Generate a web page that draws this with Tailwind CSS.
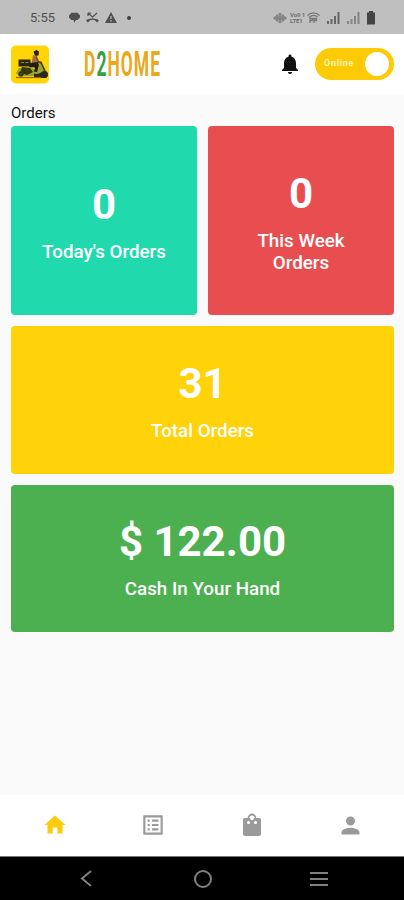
<!DOCTYPE html>
<html lang="en">
<head>
  <meta charset="UTF-8" />
  <meta name="viewport" content="width=device-width, initial-scale=1.0" />
  <title>D2HOME</title>
  <script src="https://cdn.jsdelivr.net/npm/@tailwindcss/browser@4"></script>
  <style>
    body { font-family: Roboto, sans-serif; }
  </style>
</head>
<body class="bg-[#fafafa] h-[900px] flex flex-col overflow-hidden">
  <!-- Status bar -->
  <div class="h-[34px] shrink-0 bg-[#bfbfbf] flex items-center justify-between pl-[30px] pr-[28px] pt-[1px] text-[#505050]">
    <div class="flex items-center">
      <span class="text-[13px] leading-none w-[39px]">5:55</span>
      <svg class="w-[11px] h-[11px]" viewBox="0 0 11 11" fill="currentColor">
        <path d="M2.5 0.7h6L11 3.5v2L8.5 8H7l-1.7 2.7L4.5 8H2.3L0 5.5v-2z" />
      </svg>
      <svg class="w-[13px] h-[11px] ml-[6px]" viewBox="0 0 13 11" fill="none" stroke="currentColor">
        <path d="M2 1l4.500 4L11 1M2 1v3M2 1h3" stroke-width="1.200" />
        <path d="M1.200 9.500C4 6 9 6 11.800 9.500" stroke-width="1.500" />
        <path d="M1 9.500l2-1.800M12 9.500l-2-1.800" stroke-width="2.600" />
      </svg>
      <svg class="w-[12px] h-[11px] ml-[6px]" viewBox="0 0 12 11">
        <path d="M6 0l6 11H0z" fill="currentColor" />
        <path d="M6 4v3M6 8v1.500" stroke="#bfbfbf" stroke-width="1.200" />
      </svg>
      <span class="w-[4px] h-[4px] rounded-full bg-[#404040] ml-[10px]"></span>
    </div>
    <div class="flex items-center">
      <svg class="w-[14px] h-[10px]" viewBox="0 0 14 10" fill="#858585">
        <path d="M0 5l2.500-2.500v5zM3 2l2-1v8L3 8zM5.500 0h3v10h-3zM9 1l2 1v6L9 9zM11.500 2.500L14 5l-2.500 2.500z" />
        <path d="M2 3.500h10v3H2z" />
      </svg>
      <div class="ml-[3px] w-[15px] text-[6px] leading-[6px] font-bold text-[#707070] whitespace-nowrap tracking-[-0.1px]">
        <div>Vo9 1</div>
        <div>LTE1</div>
      </div>
      <svg class="w-[13px] h-[11px] ml-[2px]" viewBox="0 0 13 11" fill="none" stroke="#757575" stroke-width="1.300">
        <path d="M.5 3.500C4 0 9 0 12.500 3.500M2 5.500c3-2.600 6-2.600 8.500-.4" />
        <path d="M3 11V6.500h2.500V8.500H3M7 11V6.500h2.500V8.500H7" />
      </svg>
      <svg class="w-[13px] h-[12px] ml-[7px]" viewBox="0 0 13 12" fill="#666666">
        <path d="M0 9h2v3H0zM3.500 7h2v5h-2zM7 4h2v8H7zM10.500 0h2v12h-2z" />
      </svg>
      <svg class="w-[13px] h-[12px] ml-[7px]" viewBox="0 0 13 12" fill="#858585">
        <path d="M0 9h2v3H0zM3.500 7h2v5h-2zM7 4h2v8H7zM10.500 0h2v12h-2z" />
      </svg>
      <svg class="w-[10px] h-[14px] ml-[6px]" viewBox="0 0 10 14" fill="#444444">
        <path d="M3 0h4v1.500h2v12H1v-12h2z" />
      </svg>
    </div>
  </div>

  <!-- Header -->
  <header class="h-[60px] shrink-0 bg-white flex items-center px-[10px]">
    <svg class="w-[39px] h-[39px]" viewBox="0 0 39 39">
      <rect x="1" y="0.500" width="38" height="38" rx="5" fill="#ffd506" />
      <!-- delivery box -->
      <path d="M8.500 14.500h12v7h-12z" fill="#2b260c" />
      <path d="M11 17.500h3M15.500 17.500h3" stroke="#9c8a2a" stroke-width="1" />
      <!-- scooter -->
      <path d="M9 23l12-1 4 3 3-1 2-6 3 2 4 7-6 4H9l-3-3z" fill="#9aa32f" />
      <path d="M12 22l8 1 3 4-6 3-7-2z" fill="#36360f" />
      <path d="M28.500 17l3 1.500 3.500 8" fill="none" stroke="#3c4018" stroke-width="1.500" />
      <circle cx="11" cy="29" r="2.700" fill="#3b3d15" />
      <path d="M24 28.500c4 2 7-1.500 11-2.500l3 3-2 4H24z" fill="#292b22" />
      <circle cx="34.500" cy="29.500" r="3.500" fill="#292b22" />
      <!-- rider -->
      <path d="M23.500 6.500l3-1.500 2.500 1.500-.5 4-3.500.500z" fill="#2a251c" />
      <path d="M23 10l4 1 1.500 6-2 3-5-1z" fill="#a86f45" />
      <path d="M20 18l8-1 1 3-2 7-3-.5 1-4-6-.5z" fill="#201d17" />
      <path d="M26 12l2.500 4.500 3.500 1" fill="none" stroke="#6b4726" stroke-width="1.500" />
      <path d="M6 32.500h25" stroke="#a0650f" stroke-width="1.300" />
    </svg>
    <!-- wordmark, condensed horizontally -->
    <div class="w-[78px] ml-[35px] pt-[2px]">
      <div class="w-max origin-left scale-x-[0.5] flex gap-[2px] text-[35px] leading-[30px] font-bold text-[#eaa91c]">
        <span>D</span><span class="text-[#37a047]">2</span><span class="tracking-[2px]">HOME</span>
      </div>
    </div>
    <svg class="w-[24px] h-[26px] ml-auto" viewBox="0 0 24 24" fill="#111111">
      <path d="M12 22c1.100 0 2-.9 2-2h-4c0 1.100.89 2 2 2zm6-6v-5c0-3.070-1.640-5.640-4.500-6.320V4c0-.83-.67-1.500-1.500-1.500s-1.500.67-1.500 1.500v.68C7.630 5.360 6 7.920 6 11v5l-2 2v1h16v-1l-2-2z" />
    </svg>
    <div class="w-[79px] h-[32px] ml-[13px] rounded-full bg-[#fccb05] flex items-center justify-between pl-[9px] pr-[5px]">
      <span class="text-[9px] font-bold text-[#fff3b8] tracking-[0.7px]">Online</span>
      <span class="w-[24px] h-[24px] rounded-full bg-white"></span>
    </div>
  </header>

  <!-- Order summary -->
  <main class="flex-1 pl-[11px] pt-[9px] pr-[10px] text-white">
    <h1 class="text-[15px] leading-[20px] text-[#111111] mb-[3px]">Orders</h1>
    <div class="grid grid-cols-2 gap-[11px]">
      <div class="h-[189px] rounded-[4px] bg-[#20d9ad] flex flex-col items-center justify-center text-center">
        <div class="text-[42px] leading-[50px] font-bold pt-[1px]">0</div>
        <div class="mt-[11px] text-[18.8px] leading-[22px] font-medium">Today's Orders</div>
      </div>
      <div class="h-[189px] rounded-[4px] bg-[#e84e50] flex flex-col items-center justify-center text-center">
        <div class="text-[42px] leading-[50px] font-bold pt-[1px]">0</div>
        <div class="mt-[11px] text-[18.8px] leading-[22px] font-medium">This Week<br>Orders</div>
      </div>
      <div class="col-span-2 h-[148px] rounded-[4px] bg-[#ffd20a] flex flex-col items-center justify-center text-center">
        <div class="text-[42px] leading-[50px] font-bold pt-[1px]">31</div>
        <div class="mt-[11px] text-[18.8px] leading-[22px] font-medium">Total Orders</div>
      </div>
      <div class="col-span-2 h-[147px] rounded-[4px] bg-[#4caf50] flex flex-col items-center justify-center text-center">
        <div class="text-[42px] leading-[50px] font-bold">$ 122.00</div>
        <div class="mt-[11px] text-[18.8px] leading-[22px] font-medium">Cash In Your Hand</div>
      </div>
    </div>
  </main>

  <!-- Tab bar -->
  <nav class="h-[61px] shrink-0 bg-white grid grid-cols-4 items-center justify-items-center pl-[6px] pr-[5px] pb-[1px] text-[#9a9a9a]">
    <svg class="w-[24px] h-[24px] text-[#fdcd0c]" viewBox="0 0 24 24" fill="currentColor">
      <path d="M9.700 20.500v-6h4.600v6h5.200v-8.500h3L12 2.500 1.500 12h3v8.500z" />
    </svg>
    <svg class="w-[26px] h-[26px]" viewBox="0 0 24 24" fill="currentColor">
      <path d="M19 5v14H5V5h14m1.100-2H3.900c-.5 0-.9.4-.9.9v16.200c0 .4.4.9.9.9h16.200c.4 0 .9-.5.9-.9V3.900c0-.5-.5-.9-.9-.9zM11 7h6v2h-6V7zm0 4h6v2h-6v-2zm0 4h6v2h-6v-2zM7 7h2v2H7V7zm0 4h2v2H7v-2zm0 4h2v2H7v-2z" />
    </svg>
    <svg class="w-[20px] h-[24px] ml-[1px]" viewBox="0 0 20 24">
      <rect x="1" y="5" width="18" height="18" rx="1.800" fill="currentColor" />
      <path d="M6.500 7V5a3.500 3.500 0 0 1 7 0v2" fill="none" stroke="currentColor" stroke-width="1.800" />
      <circle cx="10" cy="5.200" r="2" fill="white" />
      <circle cx="6.500" cy="9.500" r="1.600" fill="white" />
      <circle cx="13.500" cy="9.500" r="1.600" fill="white" />
    </svg>
    <svg class="w-[27px] h-[27px] ml-[1px]" viewBox="0 0 24 24" fill="currentColor">
      <path d="M12 12c2.210 0 4-1.790 4-4s-1.790-4-4-4-4 1.790-4 4 1.790 4 4 4zm0 2c-2.670 0-8 1.340-8 4v2h16v-2c0-2.660-5.330-4-8-4z" />
    </svg>
  </nav>

  <!-- System navigation -->
  <div class="h-[44px] shrink-0 bg-black border-t border-[#777777] flex items-center justify-between pl-[80px] pr-[76px] text-[#808080]">
    <svg class="w-[12px] h-[17px]" viewBox="0 0 12 17" fill="none" stroke="currentColor" stroke-width="2">
      <path d="M11 1L2 8.500l9 7.500" />
    </svg>
    <span class="w-[18px] h-[18px] ml-[4px] rounded-full border-2 border-[#808080]"></span>
    <svg class="w-[18px] h-[16px]" viewBox="0 0 18 16" stroke="currentColor" stroke-width="2">
      <path d="M0 2h18M0 8h18M0 14h18" />
    </svg>
  </div>
</body>
</html>
